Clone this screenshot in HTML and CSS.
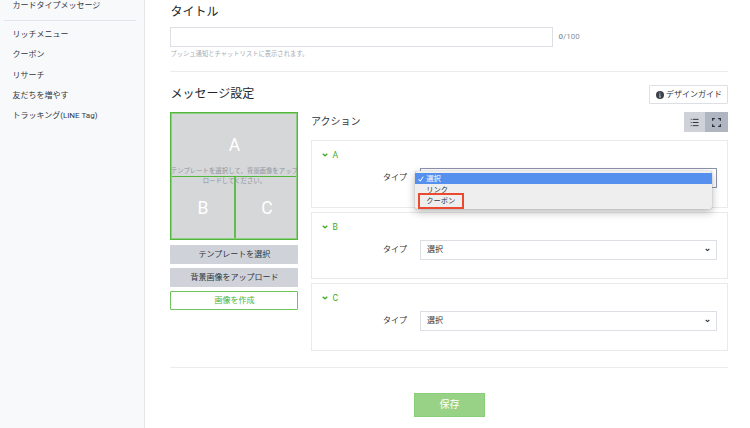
FILE: index.html
```html
<!DOCTYPE html>
<html lang="ja">
<head>
<meta charset="utf-8">
<title>カードタイプメッセージ</title>
<link rel="stylesheet" href="styles.css">
</head>
<body>
<div class="app">
  <nav class="sidebar">
    <a class="nav-item">カードタイプメッセージ</a>
    <hr class="nav-divider">
    <a class="nav-item">リッチメニュー</a>
    <a class="nav-item">クーポン</a>
    <a class="nav-item">リサーチ</a>
    <a class="nav-item">友だちを増やす</a>
    <a class="nav-item">トラッキング(LINE Tag)</a>
  </nav>
  <main class="main">
    <h2 class="heading">タイトル</h2>
    <div class="title-row">
      <input class="title-input" type="text">
      <span class="counter"><b>0</b>/100</span>
    </div>
    <p class="hint">プッシュ通知とチャットリストに表示されます。</p>
    <section class="settings">
      <header class="settings-head">
        <h2 class="heading">メッセージ設定</h2>
        <button class="guide">
          <svg class="info" viewBox="0 0 16 16"><circle cx="8" cy="8" r="8" fill="#3b4148"/><path d="M8 3v2.4M6.5 7H8v5M6 12.2h4" fill="none" stroke="#fff" stroke-width="1.2"/></svg>
          デザインガイド
        </button>
      </header>
      <div class="columns">
        <div class="template">
          <div class="preview">
            <div class="cell cell-wide">A</div>
            <div class="cell">B</div>
            <div class="cell cell-last">C</div>
            <p class="preview-note">テンプレートを選択して、背景画像をアップ<br>ロードしてください。</p>
          </div>
          <button class="btn">テンプレートを選択</button>
          <button class="btn">背景画像をアップロード</button>
          <button class="btn btn-outline">画像を作成</button>
        </div>
        <div class="actions">
          <div class="actions-head">
            <h3 class="subheading">アクション</h3>
            <div class="toggle">
              <span class="toggle-item"><svg class="toggle-icon" viewBox="0 0 10 10"><path d="M3 1.5h6.5M3 5h6.5M3 8.5h6.5M.8 1.5h1M.8 5h1M.8 8.5h1" fill="none" stroke="#22272d"/></svg></span>
              <span class="toggle-item toggle-on"><svg class="toggle-icon" viewBox="0 0 10 10"><path d="M.7 3V.7H3M7 .7h2.3V3M9.3 7v2.3H7M3 9.3H.7V7" fill="none" stroke="#22272d" stroke-width="1.2"/></svg></span>
            </div>
          </div>
          <div class="card">
            <div class="card-title"><svg class="chevron" viewBox="0 0 6 4"><path d="M.7.8 3 2.8 5.3.8" fill="none" stroke="currentColor" stroke-width="1.3"/></svg>A</div>
            <div class="field">
              <span class="label">タイプ</span>
              <div class="select select-open">
                <div class="menu">
                  <div class="option option-active"><svg class="check" viewBox="0 0 6 6"><path d="M.7 3.2 2.2 5.2 5.2.7" fill="none" stroke="#fff"/></svg>選択</div>
                  <div class="option">リンク</div>
                  <div class="option">クーポン</div>
                  <div class="highlight"></div>
                </div>
              </div>
            </div>
          </div>
          <div class="card">
            <div class="card-title"><svg class="chevron" viewBox="0 0 6 4"><path d="M.7.8 3 2.8 5.3.8" fill="none" stroke="currentColor" stroke-width="1.3"/></svg>B</div>
            <div class="field">
              <span class="label">タイプ</span>
              <div class="select">選択<svg class="caret" viewBox="0 0 5 4"><path d="M.7 1 2.5 2.6 4.3 1" fill="none" stroke="#30363d" stroke-width="1.1"/></svg></div>
            </div>
          </div>
          <div class="card">
            <div class="card-title"><svg class="chevron" viewBox="0 0 6 4"><path d="M.7.8 3 2.8 5.3.8" fill="none" stroke="currentColor" stroke-width="1.3"/></svg>C</div>
            <div class="field">
              <span class="label">タイプ</span>
              <div class="select">選択<svg class="caret" viewBox="0 0 5 4"><path d="M.7 1 2.5 2.6 4.3 1" fill="none" stroke="#30363d" stroke-width="1.1"/></svg></div>
            </div>
          </div>
        </div>
      </div>
    </section>
    <footer class="footer"><button class="save">保存</button></footer>
  </main>
</div>
</body>
</html>
```
FILE: styles.css
```css
* { box-sizing: border-box; margin: 0; padding: 0; }
body {
  width: 750px;
  height: 428px;
  overflow: hidden;
  background: #fff;
  color: #30363d;
  font: 8px/12px Roboto, "Noto Sans CJK JP", sans-serif;
}
button { font: inherit; color: inherit; }
.app { display: flex; height: 428px; }

.sidebar {
  width: 145px;
  flex: none;
  background: #f8f9fb;
  border-right: 1px solid #e4e6ea;
}
.nav-item {
  display: block;
  height: 20.2px;
  padding-left: 12.4px;
  line-height: 20.2px;
}
.nav-item:first-child { height: 20px; line-height: 11px; }
.nav-divider {
  height: 1px;
  margin: 0 8px 4.2px 4px;
  border: 0;
  background: #e1e4e8;
}

.main { width: 558px; margin-left: 25.4px; }
.heading {
  height: 27px;
  font-size: 12px;
  font-weight: 400;
  line-height: 24px;
  color: #22272d;
}
.title-row { display: flex; align-items: center; gap: 5px; }
.title-input { width: 383px; height: 20px; border: 1px solid #dcdfe3; }
.counter { color: #8b929b; }
.counter b { font-weight: 500; }
.hint { height: 24px; font-size: 6.3px; line-height: 14px; color: #a5abb3; }

.settings {
  height: 297px;
  border-top: 1px solid #ebecee;
  border-bottom: 1px solid #ebecee;
}
.settings-head {
  display: flex;
  justify-content: space-between;
  height: 40.3px;
  padding-top: 13px;
}
.settings-head .heading { line-height: 21px; margin-top: -1px; }
.guide {
  display: flex;
  align-items: center;
  justify-content: center;
  gap: 2px;
  width: 79px;
  height: 19px;
  border: 1px solid #dcdfe3;
  border-radius: 1px;
  background: #fff;
}
.info { width: 8px; height: 8px; }
.columns { display: flex; gap: 12.6px; }

.template { width: 128px; flex: none; }
.preview {
  position: relative;
  display: grid;
  grid-template: 64px 62px / 63px 63px;
  width: 128px;
  height: 128px;
  margin-bottom: 4.3px;
  border: 1px solid #52b73b;
  outline: .5px solid #8fce80;
  outline-offset: -2px;
  background: #d6d7d9;
}
.cell {
  display: flex;
  align-items: center;
  justify-content: center;
  color: #fff;
  font-size: 17.5px;
}
.cell-wide { grid-column: 1 / 3; border-bottom: 1px solid #52b73b; }
.cell-last { border-left: 2px solid #63bd4e; }
.preview-note {
  position: absolute;
  left: -1px;
  top: 53px;
  width: 128px;
  font-size: 6.4px;
  line-height: 10px;
  text-align: center;
  white-space: nowrap;
  color: #8e949b;
}
.btn {
  display: block;
  width: 128px;
  height: 19px;
  margin-bottom: 4.4px;
  border: 0;
  border-radius: 1px;
  background: #cfd2d8;
  line-height: 19px;
}
.btn-outline {
  border: 1px solid #6fc45b;
  background: #fff;
  color: #4eb235;
  line-height: 17px;
}

.actions { width: 417.4px; }
.actions-head { display: flex; justify-content: space-between; height: 28px; }
.subheading { font-size: 10px; font-weight: 400; line-height: 19px; }
.toggle { display: flex; height: 20px; }
.toggle-item {
  display: flex;
  align-items: center;
  justify-content: center;
  width: 21px;
  background: #cfd2d8;
}
.toggle-on { width: 23px; background: #afb6c2; }
.toggle-icon { width: 9px; height: 9px; }

.card {
  height: 67.5px;
  margin-bottom: 4px;
  padding: 8px 10.5px 0;
  border: 1px solid #e9eaec;
}
.card-title {
  display: flex;
  align-items: center;
  gap: 4px;
  height: 12px;
  color: #3fab24;
  font-size: 8.6px;
}
.chevron { width: 6px; height: 4px; }
.field { display: flex; align-items: center; margin-top: 7px; height: 20px; }
.label { width: 97.5px; flex: none; padding-left: 60.5px; }
.select {
  position: relative;
  display: flex;
  align-items: center;
  justify-content: space-between;
  width: 297px;
  height: 20px;
  padding: 0 6px;
  border: 1px solid #dcdfe3;
}
.select-open { border-color: #8d93ab; }
.caret { width: 5px; height: 4px; }
.menu {
  position: absolute;
  z-index: 1;
  left: -6px;
  top: 2px;
  width: 297.5px;
  height: 37.5px;
  padding-top: 1.5px;
  border-radius: 2px;
  background: #eee;
  box-shadow: 0 0 1px #888, 0 3px 8px rgba(0, 0, 0, .28);
}
.option {
  position: relative;
  height: 11.3px;
  padding-left: 11.2px;
  font-size: 7.3px;
  line-height: 11.3px;
}
.option-active { background: #5690ef; color: #fff; }
.check { position: absolute; left: 3px; top: 3px; width: 6px; height: 6px; }
.highlight {
  position: absolute;
  left: 3px;
  top: 22px;
  width: 46px;
  height: 16px;
  border: 2px solid #ea4a30;
}

.footer { display: flex; justify-content: center; padding-top: 25px; }
.save {
  width: 71px;
  height: 24px;
  border: 1px solid #8bce78;
  background: #98d287;
  color: #fff;
  font-size: 10px;
}
```
